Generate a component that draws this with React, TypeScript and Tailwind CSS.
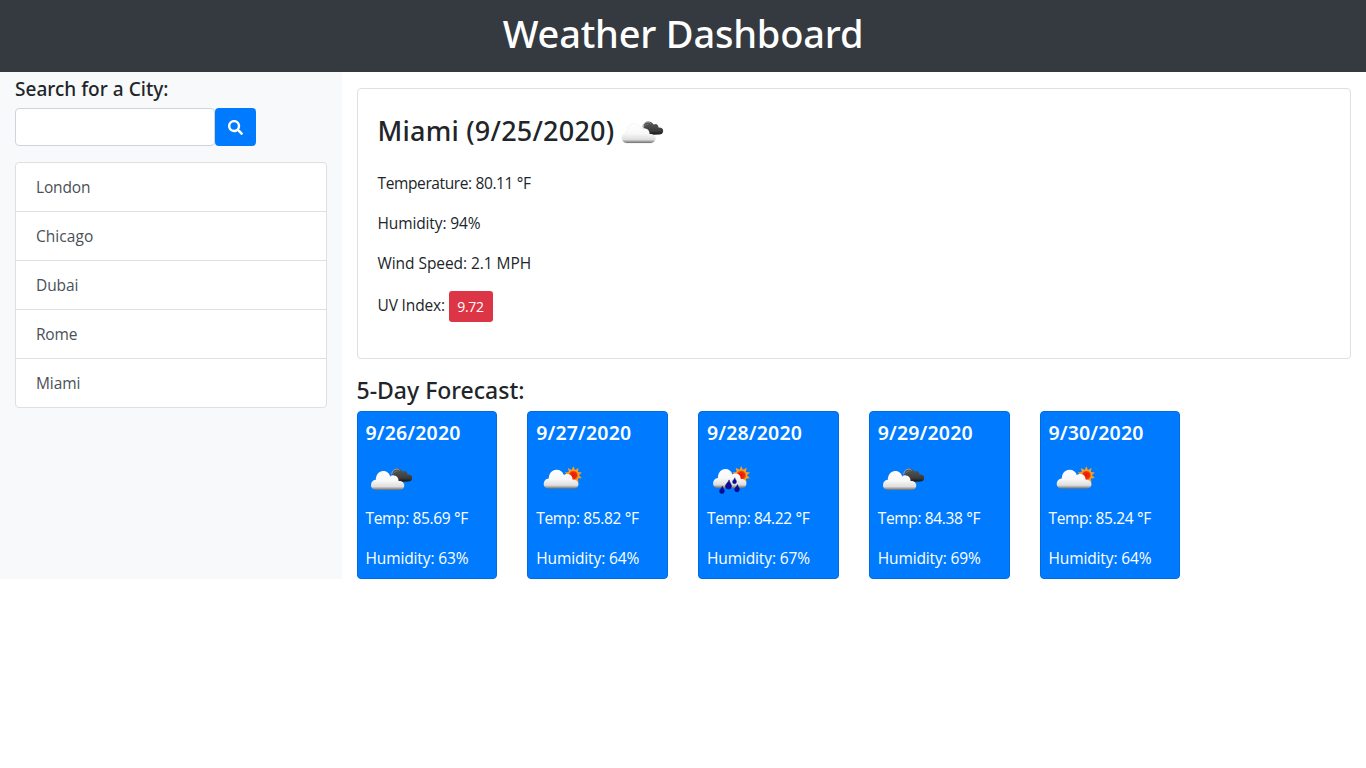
import { FaSearch } from "react-icons/fa";

type IconKind = "broken" | "partly" | "rain";

const CLOUD =
  "M10 36C6.8 36 5 33.8 5 31.3C5 28.3 7 26 9.8 25.8C10 20.6 12.8 17 17.2 17C20.8 17 23.2 19 24.2 22.4C25.4 21.5 26.6 21.2 28 21.4C31 21.8 32.7 24 32.6 27C36 26.8 38.3 28.8 38.3 31.6C38.3 34.2 36.3 36 33.6 36Z";

function Burst({ cx, cy, r }: { cx: number; cy: number; r: number }) {
  const points = Array.from({ length: 20 }, (_, i) => {
    const radius = i % 2 === 0 ? r : r * 0.62;
    const a = (Math.PI * i) / 10 - Math.PI / 2;
    return `${cx + radius * Math.cos(a)},${cy + radius * Math.sin(a)}`;
  }).join(" ");
  return (
    <>
      <polygon points={points} fill="#f7a01c" />
      <circle cx={cx} cy={cy} r={r * 0.54} fill="url(#sun)" />
    </>
  );
}

function Drop({ x, y, s }: { x: number; y: number; s: number }) {
  return (
    <path
      transform={`translate(${x} ${y}) scale(${s})`}
      d="M.5 -4.2C.9 -2 2.7 -.6 2.7 1.3A2.7 2.7 0 0 1 -2.7 1.3C-2.7 -.6 -.2 -1.8 .5 -4.2Z"
      fill="#0a0aa0"
      stroke="#08085f"
      strokeWidth="0.5"
    />
  );
}

function WeatherIcon({ kind }: { kind: IconKind }) {
  return (
    <svg width="50" height="50" viewBox="0 0 50 50" className="block shrink-0">
      <defs>
        <linearGradient id="cloud" x1="0" y1="0" x2="0" y2="1">
          <stop offset="0" stopColor="#ffffff" />
          <stop offset="0.5" stopColor="#f8f8f8" />
          <stop offset="0.82" stopColor="#dedede" />
          <stop offset="0.92" stopColor="#a0a0a0" />
          <stop offset="1" stopColor="#6c6c6c" />
        </linearGradient>
        <linearGradient id="dark" x1="0" y1="0" x2="0" y2="1">
          <stop offset="0" stopColor="#5a5a5a" />
          <stop offset="0.7" stopColor="#3c3c3c" />
          <stop offset="1" stopColor="#111111" />
        </linearGradient>
        <radialGradient id="sun">
          <stop offset="0" stopColor="#ee1508" />
          <stop offset="0.7" stopColor="#f02c0c" />
          <stop offset="1" stopColor="#fb8a24" />
        </radialGradient>
      </defs>
      {kind === "broken" && (
        <>
          <path
            d="M30 28C27 27.4 26.4 25.4 26.8 23.2C26 18 27.6 14.6 31 14.4C34 14.3 35.8 15.8 36.6 17.6C39.2 16.2 41.4 17.6 41.5 20.6C44.6 20.3 46.3 21.9 46.2 24C46.1 26.4 44.4 27.6 42 27.6Z"
            fill="url(#dark)"
          />
          <path d="M25.6 20.2C26.2 16.6 28.4 14.9 31.2 15.1C32.3 15.3 33 15.8 33.5 16.4" fill="none" stroke="#a3a3a3" strokeWidth="1" />
          <path d="M27.4 19.6C28.2 17.9 29.6 17.2 31.4 17.4" fill="none" stroke="#8a8a8a" strokeWidth="0.6" />
          <path d={CLOUD} fill="none" stroke="#777777" strokeOpacity="0.25" strokeWidth="0.6" />
          <path d={CLOUD} fill="url(#cloud)" />
        </>
      )}
      {kind === "partly" && (
        <>
          <Burst cx={37.3} cy={21.3} r={9} />
          <path transform="translate(2.5 -1.3) scale(1.045 1)" d={CLOUD} fill="url(#cloud)" />
        </>
      )}
      {kind === "rain" && (
        <>
          <Burst cx={34.2} cy={21.3} r={9.3} />
          <path transform="translate(1.1 -1.9)" d={CLOUD} fill="url(#cloud)" />
          <Drop x={14.9} y={36} s={0.9} />
          <Drop x={21.5} y={30.6} s={1.12} />
          <Drop x={27.5} y={26.8} s={0.75} />
          <Drop x={30} y={34.3} s={0.9} />
        </>
      )}
    </svg>
  );
}

const cities = [
  { name: "London", tracking: "tracking-[-0.15px]" },
  { name: "Chicago", tracking: "tracking-[0.05px]" },
  { name: "Dubai", tracking: "tracking-[-0.1px]" },
  { name: "Rome", tracking: "tracking-[-0.2px]" },
  { name: "Miami", tracking: "tracking-[-0.1px]" },
];

const forecast: { date: string; icon: IconKind; temp: string; humidity: string }[] = [
  { date: "9/26/2020", icon: "broken", temp: "85.69", humidity: "63" },
  { date: "9/27/2020", icon: "partly", temp: "85.82", humidity: "64" },
  { date: "9/28/2020", icon: "rain", temp: "84.22", humidity: "67" },
  { date: "9/29/2020", icon: "broken", temp: "84.38", humidity: "69" },
  { date: "9/30/2020", icon: "partly", temp: "85.24", humidity: "64" },
];

function Sidebar() {
  return (
    <aside className="w-1/4 shrink-0 bg-[#f8f9fa] px-[15px] pt-[5px]">
      <h4 className="mb-[7px] font-['Noto_Sans',sans-serif] text-[19px] leading-6 font-medium tracking-[0.03px]">Search for a City:</h4>
      <div className="flex">
        <input type="text" className="h-[38px] w-[200px] rounded border border-[#ced4da] bg-white px-3 outline-none" />
        <button className="flex h-[38px] w-[41px] items-center justify-center rounded bg-[#007bff] pt-px text-white">
          <FaSearch className="size-[15px]" />
        </button>
      </div>
      <ul className="mt-4 divide-y divide-[#dfdfdf] rounded border border-[#dfdfdf] bg-white text-[#495057]">
        {cities.map((c) => (
          <li key={c.name} className="px-5 py-3 leading-6">
            <span className={c.tracking}>{c.name}</span>
          </li>
        ))}
      </ul>
    </aside>
  );
}

function CurrentWeather() {
  return (
    <section className="h-[271px] rounded border border-[#dfdfdf] bg-white p-5">
      <div className="mb-4 flex h-[46px] items-center">
        <h2 className="w-[239px] pb-0.5 whitespace-nowrap font-['Noto_Sans',sans-serif] text-[27px] leading-[34px] font-medium tracking-[0.22px]">
          Miami (9/25/2020)
        </h2>
        <WeatherIcon kind="broken" />
      </div>
      <p className="mb-4 leading-6 tracking-[-0.38px]">Temperature: 80.11 °F</p>
      <p className="mb-4 leading-6 tracking-[-0.12px]">Humidity: 94%</p>
      <p className="mb-4 leading-6 tracking-[-0.06px]">Wind Speed: 2.1 MPH</p>
      <div className="flex items-start">
        <p className="w-[71px] pt-0.5 leading-6 tracking-[-0.15px]">UV Index:</p>
        <button className="h-[31px] w-11 rounded-[3px] bg-[#dc3545] text-[14px] leading-[31px] tracking-[-0.25px] text-white">9.72</button>
      </div>
    </section>
  );
}

export default function App() {
  return (
    <div className="min-h-screen bg-white font-['Open_Sans',sans-serif] text-[15.5px] text-[#212529]">
      <header className="h-[72px] bg-[#343a40] pt-[9px] text-center text-white">
        <h1 className="font-['Noto_Sans',sans-serif] text-[38px] leading-[48px] font-medium tracking-[-0.2px]">Weather Dashboard</h1>
      </header>
      <div className="flex h-[507px]">
        <Sidebar />
        <main className="flex-1 px-[15px] pt-4">
          <CurrentWeather />
          <h3 className="mt-[17px] mb-[7px] font-['Noto_Sans',sans-serif] text-[23px] leading-7 font-medium">5-Day Forecast:</h3>
          <div className="-mx-[15px] flex">
            {forecast.map((day) => (
              <div key={day.date} className="w-1/6 px-[15px]">
                <article className="h-[168px] rounded border border-[#006ce0] bg-[#007bff] px-2 pt-[9px] whitespace-nowrap text-white">
                  <h5 className="font-['Noto_Sans',sans-serif] text-[19.5px] leading-6 font-semibold tracking-[0.15px]">{day.date}</h5>
                  <div className="h-[61px] pt-[9px]">
                    <WeatherIcon kind={day.icon} />
                  </div>
                  <p className="mb-4 leading-6 tracking-[-0.36px]">Temp: {day.temp} °F</p>
                  <p className="leading-6 tracking-[-0.12px]">Humidity: {day.humidity}%</p>
                </article>
              </div>
            ))}
          </div>
        </main>
      </div>
    </div>
  );
}
